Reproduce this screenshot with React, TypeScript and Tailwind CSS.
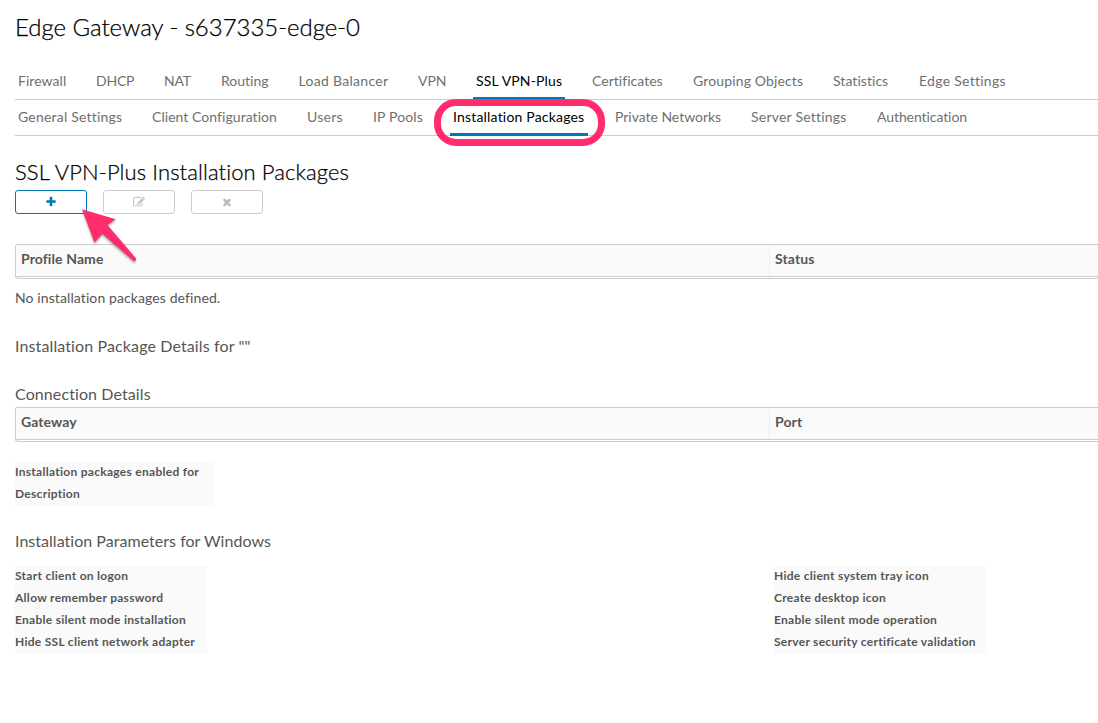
type Tab = { label: string; box: string };

const mainTabs: Tab[] = [
  { label: "Firewall", box: "w-[54px] tracking-[0.05px]" },
  { label: "DHCP", box: "w-[44px] tracking-[-0.2px]" },
  { label: "NAT", box: "w-[33px] tracking-[-0.2px]" },
  { label: "Routing", box: "w-[53.5px]" },
  { label: "Load Balancer", box: "w-[95.5px] tracking-[0.3px]" },
  { label: "VPN", box: "w-[34px] tracking-[-0.1px]" },
  { label: "SSL VPN-Plus", box: "w-[92px] tracking-[0.15px]" },
  { label: "Certificates", box: "w-[77px] tracking-[0.03px]" },
  { label: "Grouping Objects", box: "w-[116px] tracking-[0.14px]" },
  { label: "Statistics", box: "w-[62px] tracking-[0.05px]" },
  { label: "Edge Settings", box: "w-[93px] tracking-[0.28px]" },
];

const subTabs: Tab[] = [
  { label: "General Settings", box: "w-[110px] tracking-[0.2px]" },
  { label: "Client Configuration", box: "w-[131px] tracking-[0.05px]" },
  { label: "Users", box: "w-[42px] tracking-[0.25px]" },
  { label: "IP Pools", box: "w-[56px] tracking-[0.15px]" },
  { label: "Installation Packages", box: "w-[138px] tracking-[0.19px]" },
  { label: "Private Networks", box: "w-[112px] tracking-[-0.03px]" },
  { label: "Server Settings", box: "w-[102px] tracking-[0.22px]" },
  { label: "Authentication", box: "w-[96px] tracking-[-0.08px]" },
];

function TabRow({ tabs, active, highlight }: { tabs: Tab[]; active: string; highlight?: boolean }) {
  return (
    <nav className="flex h-9 gap-6 border-b border-[#cccccc]">
      {tabs.map((t) => {
        const on = t.label === active;
        return (
          <div
            key={t.label}
            className={`relative -mb-px h-9 shrink-0 whitespace-nowrap px-[3px] text-[14px] leading-[33px] ${t.box} ${
              on ? "border-b-[3px] border-[#0079b8] text-black" : "text-[#6f6f6f]"
            }`}
          >
            {t.label}
            {on && highlight && (
              <span className="absolute -left-4 -top-px h-[47px] w-[171px] rounded-[22px] border-[7px] border-[#ff2d6c]" />
            )}
          </div>
        );
      })}
    </nav>
  );
}

function TableHeader({ left, right }: { left: string; right: string }) {
  return (
    <div className="h-[35px] rounded-l-[3px] border border-r-0 border-[#cccccc]">
      <div className="flex h-8 border-b border-[#cccccc] bg-[#fafafa] text-[14px] font-bold leading-[28px] tracking-[0.1px] text-[#565656]">
        <div className="w-[754px] border-r border-[#eeeeee] pl-[5px]">{left}</div>
        <div className="pl-[5px]">{right}</div>
      </div>
    </div>
  );
}

function LabelBlock({ labels, box }: { labels: string[]; box: string }) {
  return (
    <div className={`${box} bg-[#fafafa] text-[12px] font-bold leading-[20px] tracking-[0.28px] text-[#565656]`}>
      {labels.map((l) => (
        <div key={l} className="h-[22px] whitespace-nowrap">{l}</div>
      ))}
    </div>
  );
}

const plusPath =
  "M1600 736v192q0 40-28 68t-68 28h-416v416q0 40-28 68t-68 28h-192q-40 0-68-28t-28-68v-416h-416q-40 0-68-28t-28-68v-192q0-40 28-68t68-28h416v-416q0-40 28-68t68-28h192q40 0 68 28t28 68v416h416q40 0 68 28t28 68z";
const editPath =
  "M888 1184l116-116-152-152-116 116v56h96v96h56zm440-720q-16-16-33 1l-350 350q-17 17-1 33t33-1l350-350q17-17 1-33zm80 594v190q0 119-84.5 203.5t-203.5 84.5h-832q-119 0-203.5-84.5t-84.5-203.5v-832q0-119 84.5-203.5t203.5-84.5h832q63 0 117 25 15 7 18 23 3 17-9 29l-49 49q-14 14-32 8-23-6-45-6h-832q-66 0-113 47t-47 113v832q0 66 47 113t113 47h832q66 0 113-47t47-113v-126q0-13 9-22l64-64q15-15 35-7t20 29zm-96-738l288 288-672 672h-288v-288zm444 132l-92 92-288-288 92-92q28-28 68-28t68 28l152 152q28 28 28 68t-28 68z";
const timesPath =
  "M1490 1322q0 40-28 68l-136 136q-28 28-68 28t-68-28l-294-294-294 294q-28 28-68 28t-68-28l-136-136q-28-28-28-68t28-68l294-294-294-294q-28-28-28-68t28-68l136-136q28-28 68-28t68 28l294 294 294-294q28-28 68-28t68 28l136 136q28 28 28 68t-28 68l-294 294 294 294q28 28 28 68z";

function ToolButton({ path, label, tone }: { path: string; label: string; tone: string }) {
  return (
    <button aria-label={label} className={`flex h-6 w-[72px] items-center justify-center rounded-[3px] border pr-px ${tone}`}>
      <svg width="12" height="12" viewBox="0 0 1792 1792" fill="currentColor">
        <path d={path} />
      </svg>
    </button>
  );
}

export default function App() {
  return (
    <div className="h-[723px] w-[1098px] overflow-hidden bg-white pl-[15px] font-['Lato',sans-serif] text-[#565656] [font-variant-ligatures:none]">
      <h1 className="h-16 pt-[11px] text-[24px] font-light leading-8 tracking-[-0.04px] text-black [-webkit-text-stroke:0.25px_black]">
        Edge Gateway - s637335-edge-0
      </h1>
      <TabRow tabs={mainTabs} active="SSL VPN-Plus" />
      <TabRow tabs={subTabs} active="Installation Packages" highlight />

      <h2 className="mt-5 h-[34px] text-[22px] font-light leading-8 tracking-[0.1px] text-black [-webkit-text-stroke:0.25px_black]">
        SSL VPN-Plus Installation Packages
      </h2>
      <div className="relative flex gap-4">
        <ToolButton path={plusPath} label="Add" tone="border-[#0079b8] text-[#0079b8]" />
        <ToolButton path={editPath} label="Edit" tone="border-[#cccccc] text-[#bbbbbb]" />
        <ToolButton path={timesPath} label="Delete" tone="border-[#cccccc] text-[#bbbbbb]" />
        <svg className="absolute left-[61px] top-3 drop-shadow-[0_2px_1px_rgba(0,0,0,0.3)]" width="66" height="66" viewBox="0 0 66 66">
          <path
            d="M6 7.3 39.8 17.3 31.5 22.9 60 56.3Q60.3 59.8 57.3 58.8L26.3 32 18.500 40.7Z"
            fill="#ff2d6c"
          />
        </svg>
      </div>

      <div className="mt-[30px]">
        <TableHeader left="Profile Name" right="Status" />
      </div>
      <p className="mt-[9px] text-[14px] leading-5 tracking-[0.1px]">No installation packages defined.</p>
      <h3 className="mt-[26px] text-[16px] leading-6 tracking-[0.12px]">Installation Package Details for ""</h3>
      <h3 className="mt-6 h-[25px] text-[16px] leading-6 tracking-[0.1px]">Connection Details</h3>
      <TableHeader left="Gateway" right="Port" />

      <div className="mt-5">
        <LabelBlock box="w-[198px]" labels={["Installation packages enabled for", "Description"]} />
      </div>
      <h3 className="mt-[23px] h-[25px] text-[16px] leading-6 tracking-[0.03px]">Installation Parameters for Windows</h3>
      <div className="mt-3 flex">
        <div className="w-[759px]">
          <LabelBlock
            box="w-[192px]"
            labels={["Start client on logon", "Allow remember password", "Enable silent mode installation", "Hide SSL client network adapter"]}
          />
        </div>
        <LabelBlock
          box="w-[213px]"
          labels={["Hide client system tray icon", "Create desktop icon", "Enable silent mode operation", "Server security certificate validation"]}
        />
      </div>
    </div>
  );
}
